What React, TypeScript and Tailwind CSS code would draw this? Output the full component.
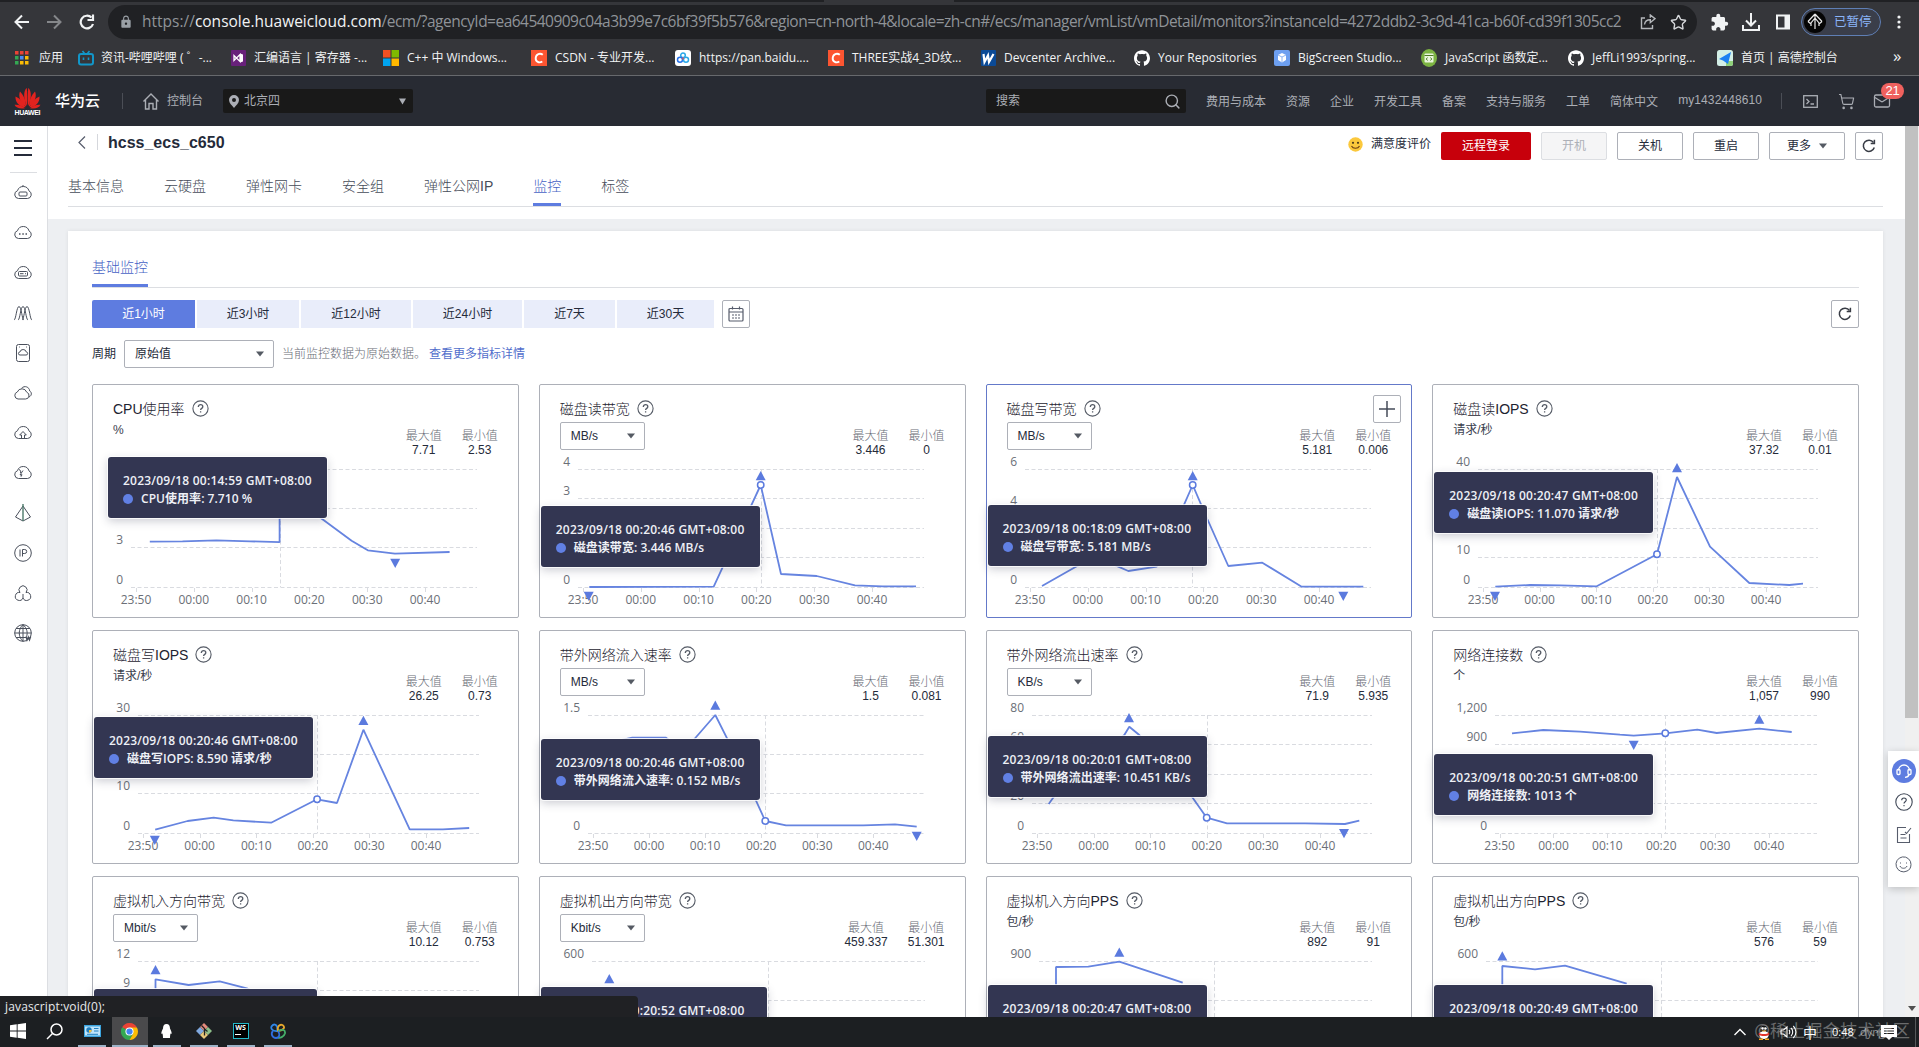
import React from 'react';
import { SiGithub } from 'react-icons/si';
import { MdExtension, MdLock } from 'react-icons/md';
import { ShoppingCart, Mail, Star, Search } from 'lucide-react';

const UI = 'font-["Liberation_Sans","Noto_Sans_CJK_SC",sans-serif]';
const SEGOE = 'font-["Open_Sans","Noto_Sans_CJK_SC",sans-serif]';

type Point = [number, number];

interface Metric {
  title: string;
  unit: string;
  select?: boolean;
  max: string;
  min: string;
  left: number;
  right: number;
  rows: number;
  yLabels: [string, number][];
  x0: number;
  step: number;
  line: Point[];
  up?: Point;
  down?: Point;
  cursor: number;
  dot?: Point;
  tip: { x: number; y: number; w: number; time: string; text: string };
  active?: boolean;
}

const metrics: Metric[] = [
  {
    title: 'CPU使用率', unit: '%', max: '7.71', min: '2.53',
    left: 39, right: 385, rows: 3, yLabels: [['3', 2], ['0', 3]], x0: 44, step: 57.8,
    line: [[57.8, 157.7], [90.5, 157.3], [124.4, 156.3], [158.2, 157.3], [187.6, 158.2], [187.6, 100], [229.8, 134.7], [259.6, 156.7], [275.8, 166.3], [302.9, 169.7], [357.6, 168]],
    down: [303.2, 175], cursor: 188.5,
    tip: { x: 16, y: 73, w: 219, time: '2023/09/18 00:14:59 GMT+08:00', text: 'CPU使用率: 7.710 %' },
  },
  {
    title: '磁盘读带宽', unit: 'MB/s', select: true, max: '3.446', min: '0',
    left: 39, right: 385, rows: 4, yLabels: [['4', 0], ['3', 1], ['0', 4]], x0: 44, step: 57.8,
    line: [[50.3, 203], [174.7, 202.7], [221.7, 101], [242, 190], [277.7, 192], [316, 201.3], [343.7, 202.3], [377, 202.3]],
    up: [221.7, 87], down: [49.7, 208], cursor: 222.5, dot: [221.7, 101],
    tip: { x: 2, y: 122, w: 219, time: '2023/09/18 00:20:46 GMT+08:00', text: '磁盘读带宽: 3.446 MB/s' },
  },
  {
    title: '磁盘写带宽', unit: 'MB/s', select: true, max: '5.181', min: '0.006', active: true,
    left: 39, right: 385, rows: 3, yLabels: [['6', 0], ['4', 1], ['0', 3]], x0: 44, step: 57.8,
    line: [[56, 202], [89, 183.3], [110, 172], [132.3, 182.7], [142.3, 187], [170.7, 182.7], [206.7, 101], [221.3, 135], [242.3, 182], [276.3, 178.7], [315.7, 202.7], [377.3, 202.7]],
    up: [206.7, 87], down: [357.3, 208], cursor: 206.5, dot: [206.7, 101],
    tip: { x: 2, y: 121, w: 219, time: '2023/09/18 00:18:09 GMT+08:00', text: '磁盘写带宽: 5.181 MB/s' },
  },
  {
    title: '磁盘读IOPS', unit: '请求/秒', max: '37.32', min: '0.01',
    left: 46, right: 386, rows: 4, yLabels: [['40', 0], ['10', 3], ['0', 4]], x0: 51, step: 56.6,
    line: [[63.3, 202.7], [98, 201], [128, 201.3], [164.7, 202.3], [225, 170.3], [245, 93], [278, 162.7], [317.3, 199], [357.3, 201], [371, 199.7]],
    up: [245, 79], down: [63, 208], cursor: 225.5, dot: [225, 170.3],
    tip: { x: 2, y: 88, w: 219, time: '2023/09/18 00:20:47 GMT+08:00', text: '磁盘读IOPS: 11.070 请求/秒' },
  },
  {
    title: '磁盘写IOPS', unit: '请求/秒', max: '26.25', min: '0.73',
    left: 46, right: 387, rows: 3, yLabels: [['30', 0], ['10', 2], ['0', 3]], x0: 51, step: 56.6,
    line: [[63.2, 199.7], [95.6, 191], [121.7, 187.7], [141.3, 190.3], [179.1, 192.7], [225.1, 169.3], [245, 173], [271.4, 99.7], [317.7, 199.3], [350.9, 199.3], [377.2, 198]],
    up: [271.4, 85.7], down: [62.8, 206], cursor: 225.5, dot: [225.1, 169.3],
    tip: { x: 2, y: 87, w: 219, time: '2023/09/18 00:20:46 GMT+08:00', text: '磁盘写IOPS: 8.590 请求/秒' },
  },
  {
    title: '带外网络流入速率', unit: 'MB/s', select: true, max: '1.5', min: '0.081',
    left: 49, right: 386, rows: 3, yLabels: [['1.5', 0], ['0', 3]], x0: 54, step: 56.06,
    line: [[60, 115], [93.3, 107.7], [127, 107.7], [145, 121], [176.3, 85], [187.7, 107.7], [217, 170.7], [226.3, 191], [247, 195.3], [324.3, 195.3], [356, 194.3], [377.7, 196.7]],
    up: [176.3, 70.5], down: [377.7, 202], cursor: 226.5, dot: [226.3, 191],
    tip: { x: 2, y: 109, w: 219, time: '2023/09/18 00:20:46 GMT+08:00', text: '带外网络流入速率: 0.152 MB/s' },
  },
  {
    title: '带外网络流出速率', unit: 'KB/s', select: true, max: '71.9', min: '5.935',
    left: 46, right: 386, rows: 4, yLabels: [['80', 0], ['60', 1], ['20', 3], ['0', 4]], x0: 51, step: 56.6,
    line: [[62.7, 174], [67.7, 167], [138.3, 105], [143.3, 96.7], [153.3, 105], [206.3, 167.3], [220.7, 187.7], [241, 193.3], [319, 193.3], [359, 194], [373.3, 190.7]],
    up: [143, 83], down: [358, 199.3], cursor: 221.5, dot: [220.7, 187.7],
    tip: { x: 2, y: 106, w: 219, time: '2023/09/18 00:20:01 GMT+08:00', text: '带外网络流出速率: 10.451 KB/s' },
  },
  {
    title: '网络连接数', unit: '个', max: '1,057', min: '990',
    left: 63, right: 385, rows: 4, yLabels: [['1,200', 0], ['900', 1], ['0', 4]], x0: 67.6, step: 53.87,
    line: [[80, 103.3], [111.3, 100], [148, 101.7], [188, 104.7], [201.7, 105.7], [233.3, 103.3], [265.3, 99.7], [284.7, 103], [327.3, 98.7], [359.7, 102]],
    up: [327.3, 84.5], down: [201.7, 111], cursor: 233.5, dot: [233.3, 103.3],
    tip: { x: 2, y: 124, w: 219, time: '2023/09/18 00:20:51 GMT+08:00', text: '网络连接数: 1013 个' },
  },
  {
    title: '虚拟机入方向带宽', unit: 'Mbit/s', select: true, max: '10.12', min: '0.753',
    left: 46, right: 387, rows: 4, yLabels: [['12', 0], ['9', 1]], x0: 51, step: 56.6,
    line: [[63.5, 130], [63.5, 103.3], [96.6, 109], [127.7, 105.3], [154.8, 112.3], [180, 125]],
    up: [63.5, 89], cursor: 225.5,
    tip: { x: 2, y: 113, w: 223, time: '2023/09/18 00:20:46 GMT+08:00', text: '虚拟机入方向带宽: 1.024 Mbit/s' },
  },
  {
    title: '虚拟机出方向带宽', unit: 'Kbit/s', select: true, max: '459.337', min: '51.301',
    left: 53, right: 386, rows: 3, yLabels: [['600', 0]], x0: 58, step: 55.5,
    line: [[70.3, 112.5], [90, 125]],
    up: [70.3, 98], cursor: 229.5,
    tip: { x: 2, y: 111, w: 226, time: '2023/09/18 00:20:52 GMT+08:00', text: '虚拟机出方向带宽: 82.6 Kbit/s' },
  },
  {
    title: '虚拟机入方向PPS', unit: '包/秒', max: '892', min: '91',
    left: 53, right: 386, rows: 3, yLabels: [['900', 0]], x0: 58, step: 55.5,
    line: [[70, 120], [70, 91], [102.3, 90.7], [133.3, 85.7], [196.7, 106.7]],
    up: [133.3, 71.5], cursor: 228.5,
    tip: { x: 2, y: 109, w: 219, time: '2023/09/18 00:20:47 GMT+08:00', text: '虚拟机入方向PPS: 142 包/秒' },
  },
  {
    title: '虚拟机出方向PPS', unit: '包/秒', max: '576', min: '59',
    left: 54, right: 386, rows: 3, yLabels: [['600', 0]], x0: 58, step: 55.5,
    line: [[70.3, 120], [70.3, 90], [103, 93.3], [133, 89.7], [194.7, 107.7]],
    up: [70.3, 75.3], cursor: 229.5,
    tip: { x: 2, y: 109, w: 219, time: '2023/09/18 00:20:49 GMT+08:00', text: '虚拟机出方向PPS: 98 包/秒' },
  },
];

const times = ['23:50', '00:00', '00:10', '00:20', '00:30', '00:40'];

const Chart: React.FC<{ m: Metric }> = ({ m }) => {
  const top = 85.5;
  const gridY = (i: number) => Math.round(top + (118 / m.rows) * i) - 0.5;
  return (
    <svg
      width="425"
      height="167"
      viewBox="1 66 425 167"
      className='block shrink-0 overflow-visible font-["Open_Sans",sans-serif] text-[12px]'
    >
      <g stroke="#d9dbe0" strokeWidth="1" strokeDasharray="4 2.5">
        {Array.from({ length: m.rows + 1 }, (_, i) => (
          <line key={i} x1={m.left} x2={m.right} y1={gridY(i)} y2={gridY(i)} />
        ))}
        <line x1={m.cursor} x2={m.cursor} y1="85" y2="203" />
      </g>
      {times.map((t, i) => (
        <g key={t}>
          <line x1={Math.round(m.x0 + m.step * i) + 0.5} x2={Math.round(m.x0 + m.step * i) + 0.5} y1="204" y2="208" stroke="#d9dbe0" />
          <text x={m.x0 + m.step * i} y="220" textAnchor="middle" fill="#6b6f77">{t}</text>
        </g>
      ))}
      {m.yLabels.map(([label, i]) => (
        <text key={label} x={m.left - 8} y={gridY(i) - 4} textAnchor="end" fill="#6b6f77">{label}</text>
      ))}
      <polyline points={m.line.map((p) => p.join(',')).join(' ')} fill="none" stroke="#6684e0" strokeWidth="1.8" strokeLinejoin="bevel" />
      {m.up && <path d={`M${m.up[0]} ${m.up[1]}l5 9.2h-10z`} fill="#5b7ade" />}
      {m.down && <path d={`M${m.down[0]} ${m.down[1] + 9}l5 -9.2h-10z`} fill="#5b7ade" />}
      {m.dot && <circle cx={m.dot[0]} cy={m.dot[1]} r="3.2" fill="#fff" stroke="#5b7ade" strokeWidth="1.5" />}
    </svg>
  );
};

const Help = () => (
  <svg width="17" height="17" viewBox="0 0 17 17" fill="none" stroke="#555b66" strokeWidth="1.1" className="-mt-[2px]">
    <circle cx="8.5" cy="8.5" r="7.6" />
    <path d="M6.3 6.9c0-1.3 1-2.2 2.3-2.2s2.2.8 2.2 2c0 1.7-2.2 1.6-2.2 3.3M8.6 11.3v1.3" strokeWidth="1.3" />
  </svg>
);

const Caret = () => (
  <svg width="8" height="6" viewBox="0 0 8 6">
    <path d="M0 .5h8L4 5.5z" fill="#555a63" />
  </svg>
);

const Refresh = () => (
  <svg width="14" height="14" viewBox="0 0 14 14" fill="none" stroke="#383c45" strokeWidth="1.5">
    <path d="M12.3 8.5A5.6 5.6 0 1 1 11.5 3.5" />
    <path d="M12.4 .8v3.7H8.7" />
  </svg>
);

const MetricCard: React.FC<{ m: Metric }> = ({ m }) => (
  <div className={`relative h-[234px] rounded-[2px] border bg-white ${m.active ? 'border-[#6479c9]' : 'border-[#adb0b8]'}`}>
    <div className="flex h-[65px] justify-between px-5">
      <div className="pt-[13px]">
        <div className="flex h-[22px] items-center gap-[7px] text-[14px] font-light text-[#1d2330]">
          {m.title}
          <Help />
        </div>
        {m.select ? (
          <div className="mt-[2px] flex h-7 w-[85px] items-center justify-between rounded-[2px] border border-[#adb0b8] pr-[9px] pl-2.5 text-[12px] text-[#252b3a]">
            {m.unit}
            <Caret />
          </div>
        ) : (
          <div className="mt-[1px] text-[12px] leading-[18px] text-[#3a404e]">{m.unit}</div>
        )}
      </div>
      <div className="flex gap-5 pt-[44px] text-center text-[12px] leading-[14px]">
        <div>
          <div className="font-light text-[#686c76]">最大值</div>
          <div className="text-[#252b3a]">{m.max}</div>
        </div>
        <div>
          <div className="font-light text-[#686c76]">最小值</div>
          <div className="text-[#252b3a]">{m.min}</div>
        </div>
      </div>
    </div>
    <Chart m={m} />
    {m.active && (
      <div className="absolute top-[10px] right-[10px] flex size-7 items-center justify-center rounded-[2px] border border-[#adb0b8] bg-white">
        <svg width="16" height="16" viewBox="0 0 16 16" stroke="#464c59" strokeWidth="1.5"><path d="M8 0v16M0 8h16" /></svg>
      </div>
    )}
    <div
      className={`absolute z-10 h-[61px] rounded-[3px] bg-[#333652] pt-[15px] pl-[15px] text-[12px] leading-[18px] font-semibold whitespace-nowrap text-[#eef0f6] shadow-[0_0_0_1px_rgba(255,255,255,0.8),0_3px_10px_rgba(40,45,70,0.25)] ${SEGOE}`}
      style={{ left: m.tip.x - 1, top: m.tip.y - 1, width: m.tip.w }}
    >
      <div className="tracking-[0.22px]">{m.tip.time}</div>
      <div className="flex items-center gap-2 tracking-[0.04px]">
        <span className="size-[10px] rounded-full bg-[#6180e4]" />
        {m.tip.text}
      </div>
    </div>
  </div>
);

const bookmarks: { w: number; gap: string; label: string; icon: React.ReactNode }[] = [
  {
    w: 63, gap: 'gap-[10px]', label: '应用',
    icon: (
      <svg width="14" height="14" viewBox="0 0 14 14">
        {['#ea4335', '#ea4335', '#ea4335', '#34a853', '#4c8bf5', '#fbbc05', '#34a853', '#fbbc05', '#fbbc05'].map((c, i) => (
          <rect key={i} x={(i % 3) * 5} y={Math.floor(i / 3) * 5} width="3.5" height="3.5" fill={c} />
        ))}
      </svg>
    ),
  },
  {
    w: 153, gap: 'gap-[7px]', label: '资讯-哔哩哔哩 ( ゜-...',
    icon: (
      <svg width="16" height="16" viewBox="0 0 16 16" fill="none" stroke="#1296c8" strokeWidth="2">
        <rect x="1" y="4" width="14" height="10.5" rx="2" />
        <path d="M4.5 1l2 2.5M11.5 1l-2 2.5M5.5 7.5v2.5M10.5 7.5v2.5" strokeWidth="1.6" />
      </svg>
    ),
  },
  {
    w: 152, gap: 'gap-[8px]', label: '汇编语言 | 寄存器 -...',
    icon: (
      <svg width="15" height="16" viewBox="0 0 15 16">
        <rect width="15" height="16" rx="1" fill="#68217a" />
        <path d="M3 5.5v5l6-6v7z" fill="none" stroke="#fff" strokeWidth="1.3" />
        <path d="M9 3.5l3 1v7l-3 1z" fill="#fff" />
      </svg>
    ),
  },
  {
    w: 148, gap: 'gap-[8px]', label: 'C++ 中 Windows...',
    icon: (
      <svg width="16" height="16" viewBox="0 0 16 16">
        <path d="M0 0h7.5v7.5H0z" fill="#f25022" />
        <path d="M8.5 0H16v7.5H8.5z" fill="#7fba00" />
        <path d="M0 8.5h7.5V16H0z" fill="#00a4ef" />
        <path d="M8.5 8.5H16V16H8.5z" fill="#ffb900" />
      </svg>
    ),
  },
  { w: 144, gap: 'gap-[8px]', label: 'CSDN - 专业开发...', icon: <Csdn /> },
  {
    w: 153, gap: 'gap-[8px]', label: 'https://pan.baidu....',
    icon: (
      <svg width="16" height="16" viewBox="0 0 16 16" fill="none" strokeWidth="1.5">
        <rect width="16" height="16" rx="3" fill="#fff" />
        <circle cx="8" cy="5.3" r="2.3" stroke="#2aa8e8" />
        <circle cx="5" cy="9.7" r="2.5" stroke="#2772e8" />
        <circle cx="11" cy="9.7" r="2.5" stroke="#2aa8e8" />
        <path d="M8 7.5v2" stroke="#ee4b4b" />
      </svg>
    ),
  },
  { w: 153, gap: 'gap-[8px]', label: 'THREE实战4_3D纹...', icon: <Csdn /> },
  {
    w: 153, gap: 'gap-[8px]', label: 'Devcenter Archive...',
    icon: (
      <svg width="15" height="16" viewBox="0 0 15 16">
        <rect width="15" height="16" rx="1" fill="#0b4a96" />
        <path d="M2.5 4l1 8L7 5.5l1 6.5 4.5-8" fill="none" stroke="#fff" strokeWidth="2.2" />
      </svg>
    ),
  },
  { w: 140, gap: 'gap-[8px]', label: 'Your Repositories', icon: <SiGithub size={16} color="#fff" /> },
  {
    w: 147, gap: 'gap-[8px]', label: 'BigScreen Studio...',
    icon: (
      <svg width="16" height="16" viewBox="0 0 16 16">
        <rect width="16" height="16" rx="2" fill="#6d9ff0" />
        <path d="M8 3l4 2v5l-4 2.5L4 10V5z" fill="#fff" />
        <path d="M4 5l4 2 4-2M8 7v5" stroke="#8db4f3" fill="none" />
      </svg>
    ),
  },
  {
    w: 147, gap: 'gap-[8px]', label: 'JavaScript 函数定...',
    icon: (
      <svg width="16" height="18" viewBox="0 0 16 18">
        <ellipse cx="8" cy="9" rx="8" ry="9" fill="#7cb342" />
        <rect x="3.5" y="4.500" width="9" height="9" rx="1" fill="#e9f5dc" />
        <path d="M3.500 6.500h9" stroke="#4c7a22" />
        <path d="M6.500 8.500L5.300 10l1.200 1.500M9.500 8.500L10.700 10l-1.200 1.500" stroke="#4c7a22" fill="none" />
      </svg>
    ),
  },
  { w: 149, gap: 'gap-[8px]', label: 'JeffLi1993/spring...', icon: <SiGithub size={16} color="#fff" /> },
  {
    w: 140, gap: 'gap-[8px]', label: '首页 | 高德控制台',
    icon: (
      <svg width="16" height="16" viewBox="0 0 16 16">
        <rect width="16" height="16" rx="2.5" fill="#d3efe6" />
        <path d="M9 11h7v2.5A2.5 2.5 0 0 1 13.5 16H9z" fill="#8fd17a" />
        <path d="M14 2L2 9l4 1.5L11 14z" fill="#1c80f2" />
      </svg>
    ),
  },
];

function Csdn() {
  return (
    <svg width="16" height="16" viewBox="0 0 16 16">
      <rect width="16" height="16" fill="#fc5531" />
      <path d="M11.8 4.8C9 2.5 5 4 4.7 8c-.2 4 3.6 5.4 6.600 3.500" fill="none" stroke="#fff" strokeWidth="1.900" />
    </svg>
  );
}

const BrowserChrome = () => (
  <div className={`bg-[#35363a] ${SEGOE}`}>
    <div className="flex h-[2px] bg-[#202124] pl-[824px]">
      <div className="w-[130px] bg-[#35363a]" />
    </div>
    <div className="flex h-[40px] items-center">
      <div className="flex w-[108px] items-center gap-[16px] pl-[13px]">
        <svg width="17" height="16" viewBox="0 0 17 16" fill="none" stroke="#f1f3f4" strokeWidth="2"><path d="M16 8H3M9 1.5L2.5 8 9 14.5" /></svg>
        <svg width="17" height="16" viewBox="0 0 17 16" fill="none" stroke="#85878a" strokeWidth="2"><path d="M1 8h13M8 1.5L14.5 8 8 14.5" /></svg>
        <svg width="16" height="16" viewBox="0 0 16 16" fill="none" stroke="#f1f3f4" strokeWidth="2.2"><path d="M14 10A6.3 6.3 0 1 1 12.500 3.600" /><path d="M14 .5v5.500H8.500" /></svg>
      </div>
      <div className="flex h-[34px] w-[1589px] items-center rounded-full bg-[#202124] pl-[11px]">
        <MdLock size={14} color="#9aa0a6" />
        <div className="ml-[9px] w-[1488px] shrink-0 text-[15.5px] tracking-[-0.52px] whitespace-nowrap text-[#8f9398]">
          <span className="tracking-normal">
            https://<span className="text-[#f1f3f4]">console.huaweicloud.com</span>
          </span>
          /ecm/?agencyId=ea64540909c04a3b99e7c6bf39f5b576&amp;region=cn-north-4&amp;locale=zh-cn#/ecs/manager/vmList/vmDetail/monitors?instanceId=4272ddb2-3c9d-41ca-b60f-cd39f1305cc2
        </div>
        <svg width="16" height="16" viewBox="0 0 16 16" fill="none" stroke="#b4b7bb" strokeWidth="1.4" className="ml-[10px] shrink-0">
          <path d="M5 4H1.5v10.500h11V11" />
          <path d="M4.500 10.500C5 7 7.500 5.700 10.300 5.700V8.500L15 4.700 10.300 1v2.700" />
        </svg>
        <Star size={17} color="#d5d7da" strokeWidth={2} className="ml-[14px] shrink-0" />
      </div>
      <MdExtension size={19} color="#f1f3f4" className="ml-[13px]" />
      <svg width="18" height="18" viewBox="0 0 18 18" fill="none" stroke="#f1f3f4" strokeWidth="2" className="ml-[13px]"><path d="M9 0v12M4 7.500l5 5 5-5M1 12v5h16v-5" /></svg>
      <svg width="14" height="16" viewBox="0 0 14 16" className="ml-[16px]"><rect x="1" y="1.500" width="12" height="13" fill="none" stroke="#f1f3f4" strokeWidth="2" /><path d="M8.500 1h5v14h-5z" fill="#f1f3f4" /></svg>
      <div className="ml-[11px] flex h-[28px] w-[80px] items-center gap-[8px] rounded-full border border-[#5f7fb5] bg-[#3a3e4a] pl-[2px] text-[12.5px] text-[#8ab4f8]">
        <svg width="22" height="22" viewBox="0 0 22 22" fill="none" stroke="#e8e8e8" strokeWidth="1.2">
          <circle cx="11" cy="11" r="11" fill="#050505" stroke="none" />
          <path d="M11 3v15M11 3l-7 7.500M11 3l7 7.500M11 7l-4 5v3M11 7l4 5v3M4 10.500L7 13M18 10.500L15 13" />
        </svg>
        <span className="whitespace-nowrap">已暂停</span>
      </div>
      <svg width="4" height="14" viewBox="0 0 4 14" fill="#f1f3f4" className="ml-[16px]"><circle cx="2" cy="2" r="1.6" /><circle cx="2" cy="7" r="1.6" /><circle cx="2" cy="12" r="1.6" /></svg>
    </div>
    <div className="flex h-[34px] items-center border-b border-[#67696d] pb-[2px] pl-[15px] text-[12px] text-[#f1f3f4]">
      {bookmarks.map((b) => (
        <div key={b.label} className={`flex shrink-0 items-center whitespace-nowrap ${b.gap}`} style={{ width: b.w }}>
          <span className="shrink-0">{b.icon}</span>
          <span>{b.label}</span>
        </div>
      ))}
      <span className="ml-[36px] pb-1 text-[17px] leading-none">»</span>
    </div>
  </div>
);

const navItems = ['费用与成本', '资源', '企业', '开发工具', '备案', '支持与服务', '工单', '简体中文'];

const HuaweiLogo = () => (
  <svg width="27" height="28" viewBox="0 0 27 28" className="shrink-0">
    <g fill="#e2231f">
      <path d="M13 19C9 12 9.500 3 12.800 1c.5 5 .7 12 .2 18z" />
      <path d="M14 19c4-7 3.500-16 .2-18-.5 5-.7 12-.2 18z" />
      <path d="M12 19.500C6 16 4 9 6 4.500c3.500 3.500 6 9 6 15z" />
      <path d="M15 19.500c6-3.500 8-10.500 6-15-3.500 3.500-6 9-6 15z" />
      <path d="M11.500 20.300C6 20.500 1 15.500 1.500 9.500c4.500 2 8 5.800 10 10.800z" />
      <path d="M15.500 20.300c5.500.2 10.500-4.800 10-10.800-4.500 2-8 5.800-10 10.800z" />
      <path d="M11 21.200c-4.500 1-9 0-10.500-3.400C4 17.300 8 18.500 11 21.200z" />
      <path d="M16 21.200c4.500 1 9 0 10.500-3.400-3.500-.5-7.500.7-10.500 3.400z" />
    </g>
    <text x="0.5" y="28" textLength="26" fontSize="7" fontWeight="bold" fill="#fff">HUAWEI</text>
  </svg>
);

const TopBar = () => (
  <div className="flex h-[50px] items-center bg-[#282b33] text-[12px] text-[#abaeb5]">
    <div className="flex w-[123px] items-center gap-[14px] pl-[14px]">
      <HuaweiLogo />
      <span className="text-[15px] font-medium whitespace-nowrap text-white">华为云</span>
      <span className="ml-[8px] h-4 w-px shrink-0 bg-[#4b4e56]" />
    </div>
    <svg width="16" height="17" viewBox="0 0 16 17" fill="none" stroke="#abaeb5" strokeWidth="1.4" className="ml-[20px]">
      <path d="M.5 8.500L8 1l7.500 7.500M2.500 7v9h3.500v-5.500h4V16h3.500V7" />
    </svg>
    <span className="ml-[8px] w-[56px]">控制台</span>
    <div className="flex h-6 w-[190px] items-center rounded-[2px] bg-[#191919] pr-[7px] pl-[6px]">
      <svg width="10" height="13" viewBox="0 0 10 13"><path d="M5 0a5 5 0 0 1 5 5c0 3-3 5.500-5 8C3 10.500 0 8 0 5a5 5 0 0 1 5-5zm0 3a2 2 0 1 0 0 4 2 2 0 0 0 0-4z" fill="#abaeb5" fillRule="evenodd" /></svg>
      <span className="ml-[5px] flex-1">北京四</span>
      <svg width="7" height="7" viewBox="0 0 8 7"><path d="M0 0h8L4 7z" fill="#abaeb5" /></svg>
    </div>
    <div className="ml-[573px] flex h-6 w-[200px] items-center justify-between rounded-[2px] bg-[#191919] pr-[5px] pl-[10px]">
      搜索
      <Search size={17} strokeWidth={2} color="#abaeb5" />
    </div>
    <div className="ml-5 flex items-center gap-5 pt-px">
      {navItems.map((n) => <span key={n} className="whitespace-nowrap">{n}</span>)}
    </div>
    <span className="ml-[20px] w-[84px] pb-[3px] text-[12px] tracking-[0.1px]">my1432448610</span>
    <span className="ml-[19px] h-4 w-px bg-[#4b4e56]" />
    <svg width="15" height="13" viewBox="0 0 15 13" fill="none" stroke="#abaeb5" strokeWidth="1.3" className="ml-[21px]">
      <rect x=".7" y=".7" width="13.6" height="11.6" /><path d="M3.500 4l2.500 2.500L3.500 9M7.500 9h3.500" />
    </svg>
    <ShoppingCart size={17} strokeWidth={1.6} color="#abaeb5" className="ml-[20px]" />
    <div className="relative ml-[18px]">
      <Mail size={18} strokeWidth={1.7} color="#abaeb5" />
      <span className="absolute -top-[9px] left-[8px] flex h-[16px] w-[23px] items-center justify-center rounded-full bg-[#f0615e] text-[13px] text-white">21</span>
    </div>
  </div>
);

const CLOUD = 'M5.500 15.500h9a4 4 0 0 0 1.500-7.600A6 6 0 0 0 4.500 7.700 4 4 0 0 0 5.500 15.500z';

const sideIcons: React.ReactNode[] = [
  <><path d={CLOUD} /><rect x="6" y="9" width="8" height="4" rx="1" /><path d="M10 2v1.500" /></>,
  <><path d={CLOUD} /><path d="M6 11h1.500M9.300 11h1.500M12.500 11H14" strokeWidth="1.500" /></>,
  <><path d={CLOUD} /><rect x="5.500" y="8.500" width="9" height="4.500" rx="1" /><path d="M7 10.700h3.500M12 10.700h1" /></>,
  <path d="M1 17C3 17 3.500 3.500 6 3.500S9 17 11 17M5 17c2 0 2.500-13.500 5-13.500S13 17 15 17M9 17c2 0 2.500-13.500 5-13.500S17 17 19 17" />,
  <><rect x="3.500" y="1.500" width="13" height="17" rx="2" /><path d="M7 12h6a1.500 1.500 0 0 0 .3-3 3.300 3.300 0 0 0-6.400 0A1.500 1.500 0 0 0 7 12zM6 4h.8M13.200 4h.8" /></>,
  <><path d="M5 16h7.500a3.500 3.500 0 0 0 1.200-6.800 5 5 0 0 0-9.400-.2A3.600 3.600 0 0 0 5 16z" /><path d="M8.500 5.300c3-3.300 8-1.300 8.200 2.700 2.300 1.200 2.300 4.700-.7 6" /></>,
  <><path d={CLOUD} /><path d="M8.500 15.500V12H6.700L10 8.500l3.300 3.500h-1.800v3.500" /></>,
  <><path d={CLOUD} /><path d="M6 6.500c1.500.5 2 2 1.500 3.500M10 7.500L7 12l2-.3-1 2" /></>,
  <><path d="M10 3L2.500 14l7.500 4 7.500-4z" /><path d="M10 1v17" strokeWidth="1.4" stroke="#4d7a6b" /></>,
  <><circle cx="10" cy="10" r="8.300" /><path d="M7 6.500v7M9.500 13.500v-7h2.200a2 2 0 0 1 0 4H9.500" /></>,
  <><path d="M7 9.500a4 4 0 1 1 6 0M7 9.500a4 4 0 1 0 3 5.500M13 9.500a4 4 0 1 1-3 5.500M10 11v4" /></>,
  <><circle cx="10" cy="10" r="8.300" /><path d="M10 1.700v16.600M1.700 10h16.600M3 5.500h14M3 14.500h10M10 1.700c-5 4.500-5 12 0 16.600M10 1.700c4 3.500 5 8 3.500 12" /><path d="M13 13.500l1 3.500 1.300-3 1.200 3 1.200-3.500" strokeWidth="1.3" /></>,
];

const Sidebar = () => (
  <div className="flex w-[48px] shrink-0 flex-col items-center border-r border-[#dcdee2] bg-white pr-px">
    <div className="mt-[14px] flex h-[16px] w-[18px] flex-col justify-between">
      <span className="h-[2px] bg-[#252b3a]" />
      <span className="h-[2px] bg-[#252b3a]" />
      <span className="h-[2px] bg-[#252b3a]" />
    </div>
    <div className="mt-[16px] h-px w-[27px] bg-[#dcdee2]" />
    <div className="mt-[10px] flex flex-col gap-[20px]">
      {sideIcons.map((icon, i) => (
        <svg key={i} width="20" height="20" viewBox="0 0 20 20" fill="none" stroke="#4a505c" strokeWidth="1">{icon}</svg>
      ))}
    </div>
  </div>
);

const tabs = ['基本信息', '云硬盘', '弹性网卡', '安全组', '弹性公网IP', '监控', '标签'];

const OutlineButton: React.FC<{ children: React.ReactNode; className?: string }> = ({ children, className = 'w-[66px]' }) => (
  <div className={`flex h-7 items-center justify-center rounded-[2px] border border-[#adb0b8] text-[#252b3a] ${className}`}>{children}</div>
);

const PageHeader = () => (
  <div className="h-[93px] bg-white pr-[22px] pl-[20px]">
    <div className="flex h-[34px] text-[12px]">
      <svg width="8" height="13" viewBox="0 0 8 13" fill="none" stroke="#575d6c" strokeWidth="1.2" className="mt-[10px] ml-[10px]"><path d="M7 .5l-6 6 6 6" /></svg>
      <span className="mt-2 ml-[11px] h-4 w-px bg-[#d5d7dc]" />
      <span className="mt-[8px] ml-[10px] text-[16px] leading-[18px] font-bold text-[#252b3a]">hcss_ecs_c650</span>
      <div className="ml-auto flex items-start gap-[10px] pt-[6px]">
        <div className="mt-1 flex h-4 items-center gap-[8px] text-[#252b3a]">
          <svg width="15" height="15" viewBox="0 0 15 15">
            <circle cx="7.500" cy="7.500" r="7.200" fill="#fbc83c" />
            <circle cx="5" cy="5.800" r="1.100" fill="#4a3a1a" />
            <circle cx="10" cy="5.800" r="1.100" fill="#4a3a1a" />
            <path d="M3.500 9c1.500 3 6.500 3 8 0" stroke="#6b3d12" fill="none" strokeWidth="1.100" />
          </svg>
          满意度评价
        </div>
        <div className="flex h-7 w-[90px] items-center justify-center rounded-[2px] bg-[#c7000b] text-white">远程登录</div>
        <div className="flex h-7 w-[66px] items-center justify-center rounded-[2px] border border-[#dcdee2] bg-[#f5f5f6] text-[#adb0b8]">开机</div>
        <OutlineButton>关机</OutlineButton>
        <OutlineButton>重启</OutlineButton>
        <OutlineButton className="w-[76px] gap-[8px]">更多<Caret /></OutlineButton>
        <OutlineButton className="w-7"><Refresh /></OutlineButton>
      </div>
    </div>
    <div className="flex h-[47px] gap-10 border-b border-[#dcdee2] text-[14px] font-light text-[#464c59]">
      {tabs.map((t) => (
        <span
          key={t}
          className={t === '监控' ? 'border-b-[3px] border-[#5e7ce0] pt-[16px] leading-[20px] text-[#4662c4]' : 'pt-[16px] leading-[20px]'}
        >
          {t}
        </span>
      ))}
    </div>
  </div>
);

const ranges: [string, string][] = [
  ['近1小时', 'w-[103px]'],
  ['近3小时', 'w-[102px]'],
  ['近12小时', 'w-[110px]'],
  ['近24小时', 'w-[109px]'],
  ['近7天', 'w-[91px]'],
  ['近30天', 'w-[97px]'],
];

const Monitor = () => (
  <div className="mt-3 mr-[22px] ml-[20px] h-[860px] bg-white px-6 shadow-[0_0_4px_rgba(0,0,0,0.08)]">
    <div className="flex h-[57px] border-b border-[#dcdee2] text-[14px] text-[#4662c4]">
      <span className="border-b-[3px] border-[#5e7ce0] pt-[26px] leading-[20px] font-light">基础监控</span>
    </div>
    <div className="mt-3 flex h-7 items-center gap-[2px] text-[12px] text-[#252b3a]">
      {ranges.map(([label, w], i) => (
        <div key={label} className={`flex h-7 items-center justify-center ${w} ${i === 0 ? 'rounded-l-[2px] bg-[#5e7ce0] text-white' : 'bg-[#e9edfa]'}`}>{label}</div>
      ))}
      <OutlineButton className="ml-[6px] w-7">
        <svg width="16" height="16" viewBox="0 0 16 16" fill="none" stroke="#575d6c" strokeWidth="1.2">
          <rect x="1" y="2.500" width="14" height="12.500" rx="1" />
          <path d="M1 6h14M4.500 .5v3M11.500 .5v3M4 9h2M7 9h2M10 9h2M4 12h2M7 12h2M10 12h2" />
        </svg>
      </OutlineButton>
      <OutlineButton className="ml-auto w-7"><Refresh /></OutlineButton>
    </div>
    <div className="mt-3 flex h-7 items-center text-[12px] text-[#252b3a]">
      周期
      <div className="ml-2 flex h-7 w-[150px] items-center justify-between rounded-[2px] border border-[#adb0b8] pr-[9px] pl-2.5">
        原始值
        <Caret />
      </div>
      <span className="ml-2 font-light text-[#686c76]">当前监控数据为原始数据。</span>
      <span className="ml-[3px] text-[#526ecc]">查看更多指标详情</span>
    </div>
    <div className="mt-4 grid grid-cols-4 gap-x-5 gap-y-3">
      {metrics.map((m) => <MetricCard key={m.title} m={m} />)}
    </div>
  </div>
);

const FloatingHelp = () => (
  <div className="absolute top-[751px] right-0 z-20 flex h-[136px] w-[31px] flex-col items-center bg-white pt-[8px] shadow-[0_2px_8px_rgba(0,0,0,0.2)]">
    <svg width="24" height="24" viewBox="0 0 24 24" fill="none" stroke="#fff" strokeWidth="1.3">
      <circle cx="12" cy="12" r="12" fill="#5e7ce0" stroke="none" />
      <path d="M6.500 11.500a5.500 5.500 0 0 1 11 0M17 15.500c-.5 2-2 2.800-4 2.800" />
      <rect x="5" y="10.500" width="3" height="5" rx="1" /><rect x="16" y="10.500" width="3" height="5" rx="1" />
    </svg>
    <svg width="18" height="18" viewBox="0 0 18 18" fill="none" stroke="#3f4756" strokeWidth="1.1" className="mt-[10px]">
      <circle cx="9" cy="9" r="8.200" /><path d="M6.700 7.300c0-1.400 1-2.300 2.300-2.300s2.300.8 2.300 2.100c0 1.700-2.300 1.600-2.300 3.400M9 12v1.300" />
    </svg>
    <svg width="16" height="18" viewBox="0 0 16 18" fill="none" stroke="#575d6c" strokeWidth="1.1" className="mt-[15px]">
      <path d="M10 1.500H1.500v15h12V8M4.500 8.500h5M4.500 12h6M9 6l1.500 1.500L15 2" />
    </svg>
    <svg width="17" height="17" viewBox="0 0 17 17" fill="none" stroke="#575d6c" strokeWidth="1" className="mt-[12px]">
      <path d="M16 8.500A7.500 7.500 0 1 0 12 15c2-.5 4-3 4-6.500zM5 10c1 3 6 3 7 0M5.500 6.500v1M11.500 6.500v1" />
    </svg>
  </div>
);

const TaskIcon: React.FC<{ children: React.ReactNode; running?: boolean; active?: boolean }> = ({ children, running, active }) => (
  <div className={`flex h-[30px] w-[36px] flex-col items-center ${active ? 'bg-[#4a4a4c]' : ''}`}>
    <div className="flex h-[28px] items-center">{children}</div>
    {running && <span className={`h-[2px] bg-[#9db3c8] ${active ? 'w-[36px]' : 'w-[28px]'}`} />}
  </div>
);

const Taskbar = () => (
  <div className={`absolute inset-x-0 bottom-0 z-30 flex h-[30px] items-center bg-[#1c1f22] text-white ${SEGOE}`}>
    <div className="flex gap-[1.2px]">
      <TaskIcon>
        <svg width="16" height="16" viewBox="0 0 16 16" fill="#fff"><path d="M0 2.200l6.700-.9v6.200H0zM7.600 1.200L16 0v7.500H7.600zM0 8.400h6.700v6.300L0 13.800zM7.600 8.400H16V16l-8.400-1.200z" /></svg>
      </TaskIcon>
      <TaskIcon>
        <svg width="17" height="17" viewBox="0 0 17 17" fill="none" stroke="#fff" strokeWidth="1.5" className="mr-[2px]"><circle cx="10.500" cy="6.500" r="5.500" /><path d="M6.500 10.500L1 16" /></svg>
      </TaskIcon>
      <TaskIcon running>
        <svg width="17" height="12" viewBox="0 0 17 12"><rect width="17" height="12" fill="#3ba5e0" /><rect x="1" y="1.500" width="15" height="9" fill="#bfe4fa" /><circle cx="5" cy="5" r="2.700" fill="#1f7fc0" /><path d="M5 5h2.700A2.700 2.700 0 0 1 5 7.700z" fill="#f6c344" /><path d="M10 3.500h4.500M10 6h4.500M3 9.300h11" stroke="#1f7fc0" /></svg>
      </TaskIcon>
      <TaskIcon running active>
        <svg width="17" height="17" viewBox="0 0 18 18">
          <path d="M9 9L1.200 4.500A9 9 0 0 1 16.800 4.500z" fill="#ea4335" />
          <path d="M9 9L1.200 4.500A9 9 0 0 0 9 18l3.900-6.700z" fill="#34a853" />
          <path d="M9 4.700h7.900A9 9 0 0 1 9 18l4-7z" fill="#fbbc05" />
          <circle cx="9" cy="9" r="4.300" fill="#fff" /><circle cx="9" cy="9" r="3.300" fill="#4285f4" />
        </svg>
      </TaskIcon>
      <TaskIcon running>
        <svg width="11" height="14" viewBox="0 0 11 14" fill="#fff"><path d="M5.500 0C8 0 9 2 9 4.500c1 2 2 4 1.500 5.500L9.500 9.500C9 12 9 13 9 14H2c0-1 0-2-.5-4.500L.5 10C0 8.500 1 6.500 2 4.500 2 2 3 0 5.500 0z" /></svg>
      </TaskIcon>
      <TaskIcon running>
        <svg width="16" height="16" viewBox="0 0 16 16">
          <path d="M8 0l4 4-4 4-4-4z" fill="#e58a7c" /><path d="M12 4l4 4-4 4-4-4z" fill="#8dc08a" /><path d="M4 4l4 4-4 4-4-4z" fill="#80a9e0" /><path d="M8 8l4 4-4 4-4-4z" fill="#e8c87c" />
          <path d="M5.500 2.500l3 3v7M8.500 6l3 2.500" stroke="#222" strokeWidth="1.3" fill="none" />
        </svg>
      </TaskIcon>
      <TaskIcon running>
        <div className="flex h-4 w-4 flex-col items-start border border-[#22b8c8] bg-black pl-px text-[7px] leading-[8px] font-bold">
          WS
          <span className="mt-[2px] h-px w-[6px] bg-white" />
        </div>
      </TaskIcon>
      <TaskIcon running>
        <svg width="16" height="16" viewBox="0 0 16 16" fill="none" strokeWidth="1.8">
          <path d="M7.500 8C3 8.500.5 6 1.500 3.500 3.500 0 8 1 7.500 8z" stroke="#2f86e8" />
          <path d="M8 8C7 3.500 9.500 1 12.500 2c3 2 1.500 5.500-4.500 6z" stroke="#e8a92c" />
          <path d="M8 8.200c4-2.500 7.500-1.500 7 2-1 3.800-5.500 5.300-7 4.300" stroke="#45b06a" />
          <path d="M3 8C.5 10.500 2 15 6 15c4-.3 4-4 2-7" stroke="#2f6fe0" />
        </svg>
      </TaskIcon>
    </div>
    <div className="ml-auto flex items-center pr-[22px]">
      <svg width="12" height="8" viewBox="0 0 12 8" fill="none" stroke="#fff" strokeWidth="1.4" className="mr-[11px]"><path d="M.5 7L6 1.500 11.500 7" /></svg>
      <svg width="14" height="15" viewBox="0 0 14 15" className="mr-[9px]">
        <ellipse cx="7" cy="5" rx="4" ry="5" fill="#111" stroke="#999" strokeWidth=".4" /><ellipse cx="7" cy="10" rx="4.600" ry="4" fill="#fff" />
        <circle cx="5.500" cy="3.500" r="1.200" fill="#fff" /><circle cx="8.500" cy="3.500" r="1.200" fill="#fff" />
        <path d="M4 5.500h6L7 7z" fill="#f6a623" /><path d="M2 7.500c3 2 7 2 10 0l.5 2c-3 2-8 2-11 0z" fill="#e3352b" /><path d="M2 13.500h4v1.500H2zM8 13.500h4v1.500H8z" fill="#f6a623" />
      </svg>
      <svg width="17" height="14" viewBox="0 0 17 14" fill="none" stroke="#fff" strokeWidth="1.1" className="mr-[6px]"><path d="M1 5v4h2.500L7 12V2L3.500 5zM9 5c1 1 1 3 0 4M11 3c2.300 2 2.300 6 0 8M13.300 1c3.500 3.500 3.500 8.500 0 12" /></svg>
      <span className="mr-[15px] text-[14px]">中</span>
      <span className="w-[24px] text-[11px]">0:48</span>
      <span className="ml-[4px] w-[21px] text-[11px] whitespace-nowrap text-[#8d8f91]">dyng68</span>
      <svg width="16" height="15" viewBox="0 0 16 15"><path d="M0 0h16v12h-5l-3 3-3-3H0z" fill="#fff" /><path d="M3 3.500h10M3 6h10M3 8.500h10" stroke="#222" /></svg>
    </div>
    <span className="absolute top-0 right-[9px] text-[17.5px] leading-[26px] whitespace-nowrap text-white/35">@稀土掘金技术社区</span>
    <span className="absolute top-0 right-[3px] h-[30px] w-px bg-[#55585a]" />
  </div>
);

export default function App() {
  return (
    <div className={`relative h-[1047px] w-[1919px] overflow-hidden bg-[#edeff2] ${UI}`}>
      <BrowserChrome />
      <TopBar />
      <div className="flex h-[921px]">
        <Sidebar />
        <div className="min-w-0 flex-1 overflow-hidden">
          <PageHeader />
          <Monitor />
        </div>
        <div className="w-[14px] shrink-0 bg-[#f0f0f0]">
          <div className="h-[592px] w-[13px] bg-[#c1c1c1]" />
          <svg width="8" height="5" viewBox="0 0 8 5" className="mt-[288px] ml-[3px]"><path d="M0 0h8L4 5z" fill="#505050" /></svg>
        </div>
      </div>
      <FloatingHelp />
      <div className={`absolute bottom-[30px] left-0 z-20 h-[21px] w-[638px] rounded-tr-[4px] bg-[#202124] pl-[5px] text-[12px] leading-[21px] tracking-[0.15px] text-[#e8eaed] ${SEGOE}`}>
        javascript:void(0);
      </div>
      <Taskbar />
    </div>
  );
}
